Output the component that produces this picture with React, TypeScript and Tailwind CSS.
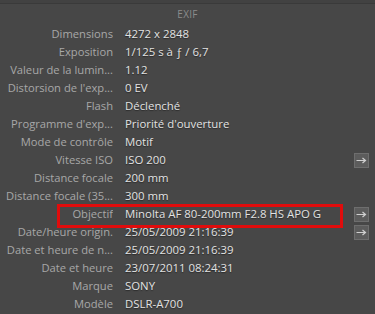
const rows: { label: string; value: string; arrow?: boolean; highlight?: boolean }[] = [
  { label: "Dimensions", value: "4272 x 2848" },
  { label: "Exposition", value: "1/125 s à ƒ / 6,7" },
  { label: "Valeur de la lumin...", value: "1.12" },
  { label: "Distorsion de l'exp...", value: "0 EV" },
  { label: "Flash", value: "Déclenché" },
  { label: "Programme d'exp...", value: "Priorité d'ouverture" },
  { label: "Mode de contrôle", value: "Motif" },
  { label: "Vitesse ISO", value: "ISO 200", arrow: true },
  { label: "Distance focale", value: "200 mm" },
  { label: "Distance focale (35...", value: "300 mm" },
  { label: "Objectif", value: "Minolta AF 80-200mm F2.8 HS APO G", arrow: true, highlight: true },
  { label: "Date/heure origin.", value: "25/05/2009 21:16:39", arrow: true },
  { label: "Date et heure de n...", value: "25/05/2009 21:16:39" },
  { label: "Date et heure", value: "23/07/2011 08:24:31" },
  { label: "Marque", value: "SONY" },
  { label: "Modèle", value: "DSLR-A700" },
];

function ArrowButton() {
  return (
    <div className="w-[15px] h-[15px] bg-[#5c5c5c] border border-[#6e6e6e] flex items-center justify-center">
      <svg width="11" height="7" viewBox="0 0 11 7">
        <path d="M0.5 3.5H9M6.5 1L9.5 3.5L6.5 6" stroke="#d0d0d0" strokeWidth="1.2" fill="none" />
      </svg>
    </div>
  );
}

export default function App() {
  return (
    <div className="w-[375px] h-[314px] overflow-hidden bg-[#474747]" style={{ fontFamily: '"Open Sans", sans-serif' }}>
      <div className="h-[4px] bg-[#424242] border-b border-[#3a3a3a]" />
      <div className="h-[21px] flex items-center justify-center text-[10px] text-[#8c8c8c] tracking-wide">EXIF</div>
      <div className="flex flex-col">
        {rows.map((r) => (
          <div key={r.label} className="relative h-[18px] flex items-center">
            {r.highlight && (
              <div className="absolute left-[57px] w-[286px] top-[-1px] bottom-[-5px] border-[3px] border-[#e00c0c]" />
            )}
            <div className="w-[113px] text-right text-[11.2px] text-[#a8a8a8] whitespace-nowrap overflow-hidden">{r.label}</div>
            <div className="ml-[12px] w-[229px] text-[11.4px] text-[#e2e2e2] whitespace-nowrap [text-shadow:0_1px_1px_#2a2a2a]">{r.value}</div>
            <div className="w-[15px]">{r.arrow && <ArrowButton />}</div>
          </div>
        ))}
      </div>
    </div>
  );
}
